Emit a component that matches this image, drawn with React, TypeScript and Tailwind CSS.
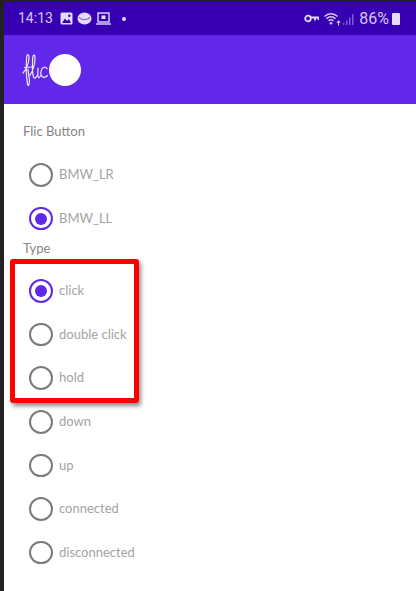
// Flic action settings screen with a red annotation box over the "Type" options

const buttons = [
  { label: 'BMW_LR', checked: false },
  { label: 'BMW_LL', checked: true },
]

const types = [
  { label: 'click', checked: true },
  { label: 'double click', checked: false },
  { label: 'hold', checked: false },
  { label: 'down', checked: false },
  { label: 'up', checked: false },
  { label: 'connected', checked: false },
  { label: 'disconnected', checked: false },
]

function Radio({ label, checked }: { label: string; checked: boolean }) {
  return (
    <div className="flex h-[43.6px] items-center pl-[25px]">
      <span
        className={`flex h-[23.5px] w-[23.5px] items-center justify-center rounded-full border-[2.5px] ${
          checked ? 'border-[#6228ea]' : 'border-[#7b7b7b]'
        }`}
      >
        {checked && <span className="h-[12px] w-[12px] rounded-full bg-[#6228ea]" />}
      </span>
      <span className="ml-[6.5px] text-[13px] text-[#a3a3a3]">{label}</span>
    </div>
  )
}

function PhotoIcon() {
  return (
    <svg width="13" height="13" viewBox="0 0 13 13">
      <rect x="0.5" y="0.5" width="12" height="12" rx="1.5" fill="#e4dbf9" />
      <path d="M2 11 L5 6.5 L7 9 L9 7 L11 11 Z" fill="#3700b3" />
      <circle cx="9.3" cy="3.7" r="1.2" fill="#3700b3" />
    </svg>
  )
}

function DiscIcon() {
  return (
    <svg width="15" height="13" viewBox="0 0 15 13">
      <ellipse cx="7.5" cy="6.5" rx="7" ry="6" fill="#e4dbf9" />
      <path d="M2 5 C4 8.5 11 8.5 13 5" fill="none" stroke="#8f6fd8" strokeWidth="1.2" />
    </svg>
  )
}

function LaptopIcon() {
  return (
    <svg width="15" height="13" viewBox="0 0 15 13" fill="none">
      <rect x="2" y="1" width="11" height="9" stroke="#e4dbf9" strokeWidth="1.4" />
      <rect x="5.5" y="3.5" width="4" height="3.5" fill="#e4dbf9" />
      <path d="M0 12 H15" stroke="#e4dbf9" strokeWidth="1.4" />
    </svg>
  )
}

function KeyIcon() {
  return (
    <svg width="15" height="9" viewBox="0 0 15 9" fill="none" stroke="#e4dbf9">
      <circle cx="4" cy="4.5" r="2.8" strokeWidth="1.8" />
      <path d="M7 3.5 H14.5 V6 M11 3.5 V6.5" strokeWidth="1.8" />
    </svg>
  )
}

function WifiIcon() {
  return (
    <svg width="17" height="14" viewBox="0 0 17 14" fill="none" stroke="#d6c8f5" strokeWidth="1.5">
      <path d="M0.5 4.5 C4 0.8 10 0.8 13.5 4.5" />
      <path d="M2.5 6.7 C5 4.2 9 4.2 11.5 6.7" />
      <path d="M4.6 8.9 C6 7.6 8 7.6 9.4 8.9" />
      <circle cx="7" cy="11.2" r="1.3" fill="#d6c8f5" stroke="none" />
      <path d="M14.5 13.5 V9 M12.8 10.7 L14.5 9 L16.2 10.7" strokeWidth="1.1" />
    </svg>
  )
}

function SignalBars() {
  return (
    <svg width="12" height="14" viewBox="0 0 12 14" fill="#7f5ccc">
      <rect x="0" y="11" width="1.5" height="2" />
      <rect x="3" y="8.5" width="1.5" height="4.5" />
      <rect x="6" y="5.5" width="1.5" height="7.5" />
      <rect x="9" y="2" width="1.5" height="11" />
    </svg>
  )
}

function FlicLogo() {
  return (
    <svg width="26" height="34" viewBox="0 0 26 34" fill="none" stroke="#efe9fe" strokeWidth="1.2" strokeLinecap="round">
      <path d="M1 20 C3 18 6.5 12 7 6 C7.3 1 5 0 4.6 5 C4 14 4.5 25 5.5 31 C6.2 34 7.5 32 7.3 27 C7.1 22 6 19 6 16" />
      <path d="M2.5 14.5 L9.5 14" />
      <path d="M8 22 C10.5 19 13 11 13 5.5 C13 0.5 10.8 1 10.6 6 C10.3 13 10 20 11.5 24 C12.5 26 14 25 15.5 22" />
      <path d="M16 15 L15.8 22 C15.8 25 17 25.5 18.5 23" />
      <path d="M25 15.5 C22.5 12.5 18.8 15 18.8 19.5 C18.8 25 23 25.5 25.5 22.5" />
    </svg>
  )
}

export default function App() {
  return (
    <div className="relative flex h-[591px] w-[416px] overflow-hidden bg-[#222222] pl-[4px] pt-[2px] font-['Lato',sans-serif]">
      <div className="flex min-w-0 flex-1 flex-col bg-white">
        {/* Status bar */}
        <div className="flex h-[33px] items-center justify-between bg-[#3700b3] pl-[14px] pr-[16px] font-['Roboto',sans-serif] text-[14px] text-[#d6c8f5]">
          <div className="flex items-center gap-[4px]">
            <span className="mr-[3px]">14:13</span>
            <PhotoIcon />
            <DiscIcon />
            <LaptopIcon />
            <span className="ml-[7px] h-[4px] w-[4px] rounded-full bg-[#e4dbf9]" />
          </div>
          <div className="flex items-center">
            <KeyIcon />
            <span className="ml-[5px]">
              <WifiIcon />
            </span>
            <span className="ml-[2px]">
              <SignalBars />
            </span>
            <span className="ml-[4px] text-[16px] leading-none">86%</span>
            <span className="ml-[3px] h-[12px] w-[8px] rounded-[1px] bg-[#e4dbf9]" />
          </div>
        </div>

        {/* App bar */}
        <div className="flex h-[69px] items-center bg-[#6228ea] pl-[18px]">
          <FlicLogo />
          <span className="ml-px h-[32px] w-[32px] rounded-full bg-white" />
        </div>

        {/* Form */}
        <div className="flex-1 text-[13px] text-[#858585]">
          <p className="flex h-[49.2px] items-center pl-[19px] pt-[7px]">Flic Button</p>
          {buttons.map((b) => (
            <Radio key={b.label} {...b} />
          ))}
          <p className="h-[28.8px] pl-[19px] leading-[16px]">Type</p>
          {types.map((t) => (
            <Radio key={t.label} {...t} />
          ))}
        </div>
      </div>

      {/* Red annotation box */}
      <div className="absolute left-[10px] top-[259px] h-[144px] w-[129px] rounded-[3px] border-[5px] border-[#fe0000] shadow-[2px_3px_4px_rgba(0,0,0,0.45)]" />
    </div>
  )
}
